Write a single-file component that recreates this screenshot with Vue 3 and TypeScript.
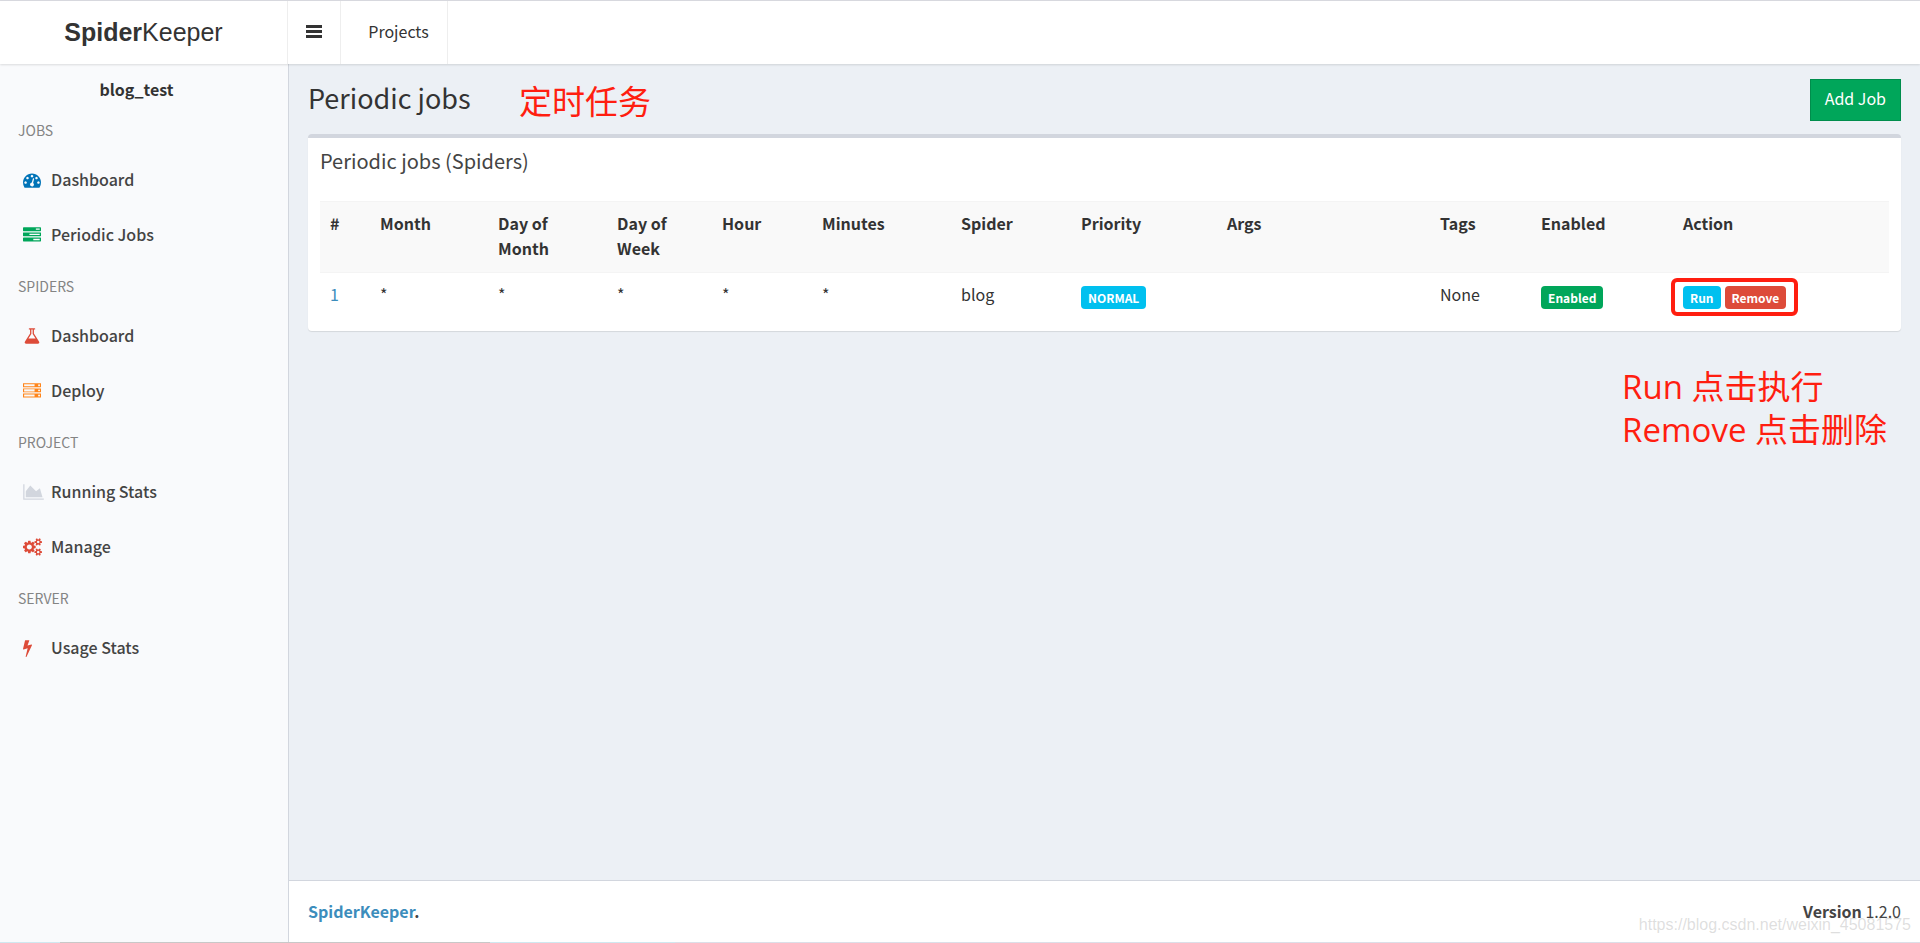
<script setup lang="ts">
import { ref } from 'vue'

interface Icon {
  width: number
  path: string
}

interface NavItem {
  label: string
  icon: string
  tone: string
}

interface NavGroup {
  title: string
  items: NavItem[]
}

interface Column {
  label: string
  weight: number
}

interface Job {
  id: number
  month: string
  dayOfMonth: string
  dayOfWeek: string
  hour: string
  minutes: string
  spider: string
  priority: string
  args: string
  tags: string
}

const icons: Record<string, Icon> = {
  gauge: {
    width: 1792,
    path: 'M384 1152q0-53-37.5-90.5t-90.5-37.5-90.5 37.5-37.5 90.5 37.5 90.5 90.5 37.5 90.5-37.5 37.5-90.5zm192-448q0-53-37.5-90.5t-90.5-37.5-90.5 37.5-37.5 90.5 37.5 90.5 90.5 37.5 90.5-37.5 37.5-90.5zm428 481l101-382q6-26-7.5-48.5t-38.5-29.5-48 6.5-30 39.5l-101 382q-60 5-107 43.5t-63 98.5q-20 77 20 146t117 89 146-20 89-117q16-60-6-117t-72-91zm660-33q0-53-37.5-90.5t-90.5-37.5-90.5 37.5-37.5 90.5 37.5 90.5 90.5 37.5 90.5-37.5 37.5-90.5zm-640-640q0-53-37.5-90.5t-90.5-37.5-90.5 37.5-37.5 90.5 37.5 90.5 90.5 37.5 90.5-37.5 37.5-90.5zm448 192q0-53-37.5-90.5t-90.5-37.5-90.5 37.5-37.5 90.5 37.5 90.5 90.5 37.5 90.5-37.5 37.5-90.5zm320 448q0 261-141 483-19 29-54 29h-1402q-35 0-54-29-141-221-141-483 0-182 71-348t191-286 286-191 348-71 348 71 286 191 191 286 71 348z',
  },
  tasks: {
    width: 1792,
    path: 'M1024 1408h640v-128h-640v128zm-384-512h1024v-128h-1024v128zm640-512h384v-128h-384v128zm512 832v256q0 26-19 45t-45 19h-1664q-26 0-45-19t-19-45v-256q0-26 19-45t45-19h1664q26 0 45 19t19 45zm0-512v256q0 26-19 45t-45 19h-1664q-26 0-45-19t-19-45v-256q0-26 19-45t45-19h1664q26 0 45 19t19 45zm0-512v256q0 26-19 45t-45 19h-1664q-26 0-45-19t-19-45v-256q0-26 19-45t45-19h1664q26 0 45 19t19 45z',
  },
  flask: {
    width: 1792,
    path: 'M1591 1448q56 89 21.5 152.5t-140.5 63.5h-1152q-106 0-140.5-63.5t21.5-152.5l503-793v-399h-64q-26 0-45-19t-19-45 19-45 45-19h512q26 0 45 19t19 45-19 45-45 19h-64v399zm-779-725l-272 429h712l-272-429-20-31v-436h-128v436z',
  },
  server: {
    width: 1792,
    path: 'M112 1446h1040v-204h-1040v204zm0-512h1040v-204h-1040v204zm1584 410q0-40-28-68t-68-28-68 28-28 68 28 68 68 28 68-28 28-68zm-1584-922h1040v-204h-1040v204zm1584 410q0-40-28-68t-68-28-68 28-28 68 28 68 68 28 68-28 28-68zm0-512q0-40-28-68t-68-28-68 28-28 68 28 68 68 28 68-28 28-68zm96 832v384h-1792v-384h1792zm0-512v384h-1792v-384h1792zm0-512v384h-1792v-384h1792z',
  },
  area: {
    width: 2048,
    path: 'M2048 1536v128h-2048v-1536h128v1408h1920zm-384-1024l256 896h-1664v-576l448-576 576 576z',
  },
  cogs: {
    width: 1920,
    path: 'M896 896q0-106-75-181t-181-75-181 75-75 181 75 181 181 75 181-75 75-181zm768 512q0-52-38-90t-90-38-90 38-38 90q0 53 37.5 90.5t90.5 37.5 90.5-37.5 37.5-90.5zm0-1024q0-52-38-90t-90-38-90 38-38 90q0 53 37.5 90.5t90.5 37.5 90.5-37.5 37.5-90.5zm-384 421v185q0 10-7 19.5t-16 10.5l-155 24q-11 35-32 76 34 48 90 115 7 11 7 20 0 12-7 19-23 30-82.5 89.5t-78.5 59.5q-11 0-21-7l-115-90q-37 19-77 31-11 108-23 155-7 24-30 24h-186q-11 0-20-7.5t-10-17.5l-23-153q-34-10-75-31l-118 89q-7 7-20 7-11 0-21-8-144-133-144-160 0-9 7-19 10-14 41-53t47-61q-23-44-35-82l-152-24q-10-1-17-9.5t-7-19.5v-185q0-10 7-19.5t16-10.5l155-24q11-35 32-76-34-48-90-115-7-11-7-20 0-12 7-20 22-30 82-89t79-59q11 0 21 7l115 90q34-18 77-32 11-108 23-154 7-24 30-24h186q11 0 20 7.5t10 17.5l23 153q34 10 75 31l118-89q8-7 20-7 11 0 21 8 144 133 144 160 0 8-7 19-12 16-42 54t-45 60q23 48 34 82l152 23q10 2 17 10.5t7 19.5zm640 533v140q0 16-149 31-12 27-30 52 51 113 51 138 0 4-4 7-122 71-124 71-8 0-46-47t-52-68q-20 2-30 2t-30-2q-14 21-52 68t-46 47q-2 0-124-71-4-3-4-7 0-25 51-138-18-25-30-52-149-15-149-31v-140q0-16 149-31 13-29 30-52-51-113-51-138 0-4 4-7 4-2 35-20t59-34 30-16q8 0 46 46.5t52 67.5q20-2 30-2t30 2q51-71 92-112l6-2q4 0 124 70 4 3 4 7 0 25-51 138 17 23 30 52 149 15 149 31zm0-1024v140q0 16-149 31-12 27-30 52 51 113 51 138 0 4-4 7-122 71-124 71-8 0-46-47t-52-68q-20 2-30 2t-30-2q-14 21-52 68t-46 47q-2 0-124-71-4-3-4-7 0-25 51-138-18-25-30-52-149-15-149-31v-140q0-16 149-31 13-29 30-52-51-113-51-138 0-4 4-7 4-2 35-20t59-34 30-16q8 0 46 46.5t52 67.5q20-2 30-2t30 2q51-71 92-112l6-2q4 0 124 70 4 3 4 7 0 25-51 138 17 23 30 52 149 15 149 31z',
  },
  bolt: {
    width: 896,
    path: 'M885 566q18 20 7 44l-540 1157q-13 25-42 25-4 0-14-2-17-5-25.5-19t-4.500-30l197-808-406 101q-4 1-12 1-18 0-31-11-18-15-13-39l201-825q4-16 18-26t32-10h328q19 0 32 12.500t13 29.500q0 8-5 18l-171 463 396-98q8-2 12-2 19 0 34 15z',
  },
}

const groups: NavGroup[] = [
  {
    title: 'JOBS',
    items: [
      { label: 'Dashboard', icon: 'gauge', tone: 'blue' },
      { label: 'Periodic Jobs', icon: 'tasks', tone: 'green' },
    ],
  },
  {
    title: 'SPIDERS',
    items: [
      { label: 'Dashboard', icon: 'flask', tone: 'red' },
      { label: 'Deploy', icon: 'server', tone: 'orange' },
    ],
  },
  {
    title: 'PROJECT',
    items: [
      { label: 'Running Stats', icon: 'area', tone: 'gray' },
      { label: 'Manage', icon: 'cogs', tone: 'red' },
    ],
  },
  {
    title: 'SERVER',
    items: [{ label: 'Usage Stats', icon: 'bolt', tone: 'red' }],
  },
]

const columns: Column[] = [
  { label: '#', weight: 50 },
  { label: 'Month', weight: 118 },
  { label: 'Day of Month', weight: 119 },
  { label: 'Day of Week', weight: 105 },
  { label: 'Hour', weight: 100 },
  { label: 'Minutes', weight: 139 },
  { label: 'Spider', weight: 120 },
  { label: 'Priority', weight: 146 },
  { label: 'Args', weight: 213 },
  { label: 'Tags', weight: 101 },
  { label: 'Enabled', weight: 142 },
  { label: 'Action', weight: 216 },
]
const totalWeight = columns.reduce((sum, c) => sum + c.weight, 0)
const share = (c: Column) => `${(c.weight / totalWeight) * 100}%`

const jobs = ref<Job[]>([
  {
    id: 1,
    month: '*',
    dayOfMonth: '*',
    dayOfWeek: '*',
    hour: '*',
    minutes: '*',
    spider: 'blog',
    priority: 'NORMAL',
    args: '',
    tags: 'None',
  },
])

const iconWidth = (name: string) => Math.round((icons[name].width * 18) / 1792)
</script>

<template>
  <div class="page">
    <header class="top">
      <a class="logo" href="#"><b>Spider</b>Keeper</a>
      <button class="toggle" type="button" aria-label="Toggle navigation">
        <svg width="16" height="13" viewBox="0 0 16 13" aria-hidden="true">
          <path d="M0 0h16v3H0zM0 5h16v3H0zM0 10h16v3H0z" fill="currentColor" />
        </svg>
      </button>
      <a class="top-link" href="#">Projects</a>
    </header>

    <div class="body">
      <aside class="side">
        <p class="project">blog_test</p>
        <nav>
          <section v-for="group in groups" :key="group.title">
            <h2 class="group-title">{{ group.title }}</h2>
            <a v-for="item in group.items" :key="item.label" class="nav-item" href="#">
              <span class="nav-icon" :class="item.tone">
                <svg
                  :width="iconWidth(item.icon)"
                  height="18"
                  :viewBox="`0 0 ${icons[item.icon].width} 1792`"
                  aria-hidden="true"
                >
                  <path :d="icons[item.icon].path" fill="currentColor" />
                </svg>
              </span>
              {{ item.label }}
            </a>
          </section>
        </nav>
      </aside>

      <div class="main">
        <main class="content">
          <div class="heading">
            <h1>Periodic jobs</h1>
            <button class="add" type="button">Add Job</button>
          </div>

          <section class="box">
            <h3 class="box-title">Periodic jobs (Spiders)</h3>
            <div class="box-body">
              <table>
                <colgroup>
                  <col v-for="c in columns" :key="c.label" :style="{ width: share(c) }" />
                </colgroup>
                <thead>
                  <tr>
                    <th v-for="c in columns" :key="c.label" scope="col">{{ c.label }}</th>
                  </tr>
                </thead>
                <tbody>
                  <tr v-for="job in jobs" :key="job.id">
                    <td><a class="job-link" href="#">{{ job.id }}</a></td>
                    <td>{{ job.month }}</td>
                    <td>{{ job.dayOfMonth }}</td>
                    <td>{{ job.dayOfWeek }}</td>
                    <td>{{ job.hour }}</td>
                    <td>{{ job.minutes }}</td>
                    <td>{{ job.spider }}</td>
                    <td class="badge-cell"><span class="badge info">{{ job.priority }}</span></td>
                    <td>{{ job.args }}</td>
                    <td>{{ job.tags }}</td>
                    <td class="badge-cell"><button class="badge success" type="button">Enabled</button></td>
                    <td class="badge-cell">
                      <span class="actions">
                        <button class="badge info" type="button">Run</button>
                        <button class="badge danger" type="button">Remove</button>
                        <span class="frame"></span>
                      </span>
                    </td>
                  </tr>
                </tbody>
              </table>
            </div>
          </section>

          <p class="note note-title">定时任务</p>
          <p class="note note-actions">Run 点击执行<br />Remove 点击删除</p>
        </main>

        <footer class="foot">
          <strong><a href="#">SpiderKeeper</a>.</strong>
          <span><b>Version</b> 1.2.0</span>
          <span class="watermark">https://blog.csdn.net/weixin_45081575</span>
        </footer>
      </div>
    </div>
    <div class="edge"></div>
  </div>
</template>

<style>
body {
  margin: 0;
}
</style>

<style scoped>
.page {
  display: flex;
  flex-direction: column;
  box-sizing: border-box;
  min-height: 100vh;
  border-top: 1px solid #d9dae0;
  background: #ecf0f5;
  color: #333;
  font-family: 'Noto Sans CJK SC', 'Noto Sans', sans-serif;
  font-size: 16px;
  line-height: 25px;
}

a {
  color: inherit;
  text-decoration: none;
}

button {
  margin: 0;
  padding: 0;
  border: 0;
  background: none;
  color: inherit;
  font: inherit;
  cursor: pointer;
}

h1,
h2,
h3,
p {
  margin: 0;
  font-weight: 400;
}

.top {
  position: relative;
  display: flex;
  height: 63px;
  background: #fff;
  box-shadow: 0 1px 2px rgba(0, 0, 0, 0.12);
}

.logo {
  box-sizing: border-box;
  width: 288px;
  border-right: 1px solid #eee;
  font-family: 'Liberation Sans', Arial, sans-serif;
  font-size: 25px;
  line-height: 63px;
  text-align: center;
}

.toggle {
  display: flex;
  align-items: center;
  justify-content: center;
  width: 53px;
  padding-bottom: 2px;
  border-right: 1px solid #eee;
}

.top-link {
  box-sizing: border-box;
  width: 107px;
  padding-left: 9px;
  border-right: 1px solid #eee;
  line-height: 60px;
  text-align: center;
}

.body {
  display: flex;
  flex: 1;
}

.side {
  width: 288px;
  border-right: 1px solid #d2d6de;
  background: #f9fafc;
}

.project {
  padding: 13px 15px 5px 0;
  font-weight: 700;
  text-align: center;
}

.group-title {
  padding: 13px 18px 12px;
  color: #848484;
  font-size: 14px;
  line-height: 21px;
}

.nav-item {
  display: flex;
  align-items: center;
  box-sizing: border-box;
  height: 55px;
  padding: 0 0 2px 23px;
  color: #444;
  font-weight: 500;
}

.nav-icon {
  display: flex;
  width: 28px;
}

.blue {
  color: #0073b7;
}

.green {
  color: #00a65a;
}

.red {
  color: #dd4b39;
}

.orange {
  color: #ff851b;
}

.gray {
  color: #d2d6de;
}

.main {
  display: flex;
  flex: 1;
  flex-direction: column;
  min-width: 0;
}

.content {
  position: relative;
  flex: 1;
  padding: 15px 19px;
}

.heading {
  display: flex;
  align-items: flex-start;
  justify-content: space-between;
  height: 55px;
}

h1 {
  font-size: 27px;
  line-height: 38px;
}

.add {
  height: 42px;
  padding: 0 14px 4px;
  border: 1px solid #008d4c;
  background: #00a65a;
  color: #fff;
}

.box {
  border-top: 4px solid #d2d6de;
  border-radius: 4px;
  background: #fff;
  box-shadow: 0 1px 1px rgba(0, 0, 0, 0.1);
}

.box-title {
  padding: 10px 12px 16px;
  color: #444;
  font-size: 20px;
  line-height: 25px;
}

.box-body {
  padding: 12px 12px 13px;
}

table {
  width: 100%;
  border-collapse: separate;
  border-spacing: 0;
  table-layout: fixed;
}

th,
td {
  padding: 9px 10px 11px;
  border-top: 1px solid #f4f4f4;
  text-align: left;
  vertical-align: top;
}

th {
  background: #f9f9f9;
  font-weight: 700;
}

td {
  height: 25px;
}

.badge-cell {
  padding: 11px 10px 9px;
}

.job-link {
  color: #3c8dbc;
}

.badge {
  display: inline-block;
  padding: 0 7px;
  border-radius: 4px;
  color: #fff;
  font-size: 12px;
  font-weight: 700;
  line-height: 23px;
}

.info {
  background: #00c0ef;
}

.success {
  background: #00a65a;
}

.danger {
  background: #dd4b39;
}

.actions {
  position: relative;
  display: inline-flex;
  gap: 4px;
}

.frame {
  position: absolute;
  inset: -8px -12px -7px;
  border: 4px solid #ff1e10;
  border-radius: 6px;
  pointer-events: none;
}

.note {
  position: absolute;
  color: #ff1e10;
  font-family: 'Open Sans', 'Noto Sans CJK SC', sans-serif;
  font-size: 33px;
  line-height: 43px;
}

.note-title {
  top: 16px;
  left: 230px;
}

.note-actions {
  top: 301px;
  right: 33px;
}

.foot {
  position: relative;
  display: flex;
  justify-content: space-between;
  padding: 18px 19px;
  border-top: 1px solid #d2d6de;
  background: #fff;
  color: #444;
}

.foot a {
  color: #3c8dbc;
}

.watermark {
  position: absolute;
  right: 9px;
  bottom: 5px;
  color: rgba(160, 160, 160, 0.35);
  font-family: 'Liberation Sans', Arial, sans-serif;
  font-size: 16px;
}

.edge {
  height: 1px;
  background: linear-gradient(90deg, #d0e8f0 0 60px, #c8c8c8 60px 490px, #d0e8f0 490px 675px, #dcdfe8 675px);
}
</style>
